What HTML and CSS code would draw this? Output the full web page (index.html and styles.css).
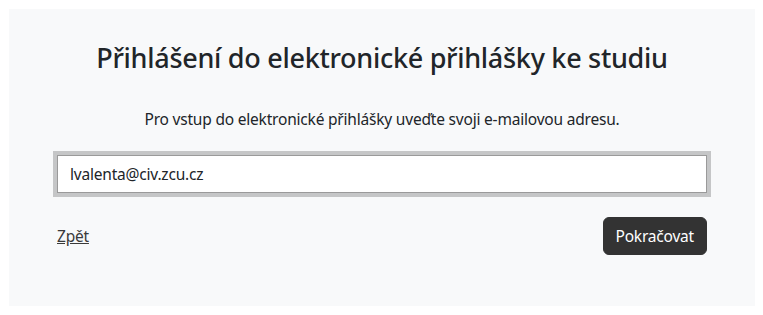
FILE: index.html
```html
<!DOCTYPE html>
<html lang="cs">
<head>
<meta charset="utf-8">
<title>Přihlášení</title>
<link rel="stylesheet" href="styles.css">
</head>
<body>
<main class="card">
  <h2 class="title">Přihlášení do elektronické přihlášky ke studiu</h2>
  <p class="lead">Pro vstup do elektronické přihlášky uveďte svoji e-mailovou adresu.</p>
  <div class="field"><span class="field-text">lvalenta@civ.zcu.cz</span></div>
  <div class="actions">
    <a class="back" href="#">Zpět</a>
    <button class="btn" type="button">Pokračovat</button>
  </div>
</main>
</body>
</html>
```
FILE: styles.css
```css
html, body { margin: 0; padding: 0; background: #fff; }
body {
  font-family: "Noto Sans", "Open Sans", sans-serif;
  color: #212529;
  padding: 9px 8px 9px 9px;
  font-size: 15.5px;
  letter-spacing: -0.2px;
}
.card {
  background: #f8f9fa;
  height: 297px;
  box-sizing: border-box;
  padding: 32px 48px 0 48px;
  display: flex;
  flex-direction: column;
}
.title {
  margin: 0;
  text-align: center;
  font-size: 27px;
  letter-spacing: -0.29px;
  line-height: 34px;
  font-weight: 500;
  color: #212529;
}
.lead {
  margin: 32px 0 0;
  text-align: center;
  font-size: 15.5px;
  line-height: 24px;
}
.field {
  margin-top: 24px;
  height: 38px;
  box-sizing: border-box;
  background: #fff;
  border: 1px solid #9a9a9a;
  box-shadow: 0 0 0 4px #c5c6c7;
  padding: 6px 12px;
  font-size: 15.5px;
  line-height: 24px;
  color: #212529;
}
.actions {
  margin-top: 24px;
  display: flex;
  justify-content: space-between;
  align-items: center;
}
.back {
  color: #3a3a3a;
  text-decoration: underline;
  font-size: 15.5px;
  line-height: 24px;
}
.btn {
  font-family: inherit;
  letter-spacing: -0.2px;
  background: #333333;
  color: #fff;
  border: 1px solid #333333;
  border-radius: 6px;
  padding: 6px 12px;
  font-size: 15.5px;
  line-height: 24px;
}
```
